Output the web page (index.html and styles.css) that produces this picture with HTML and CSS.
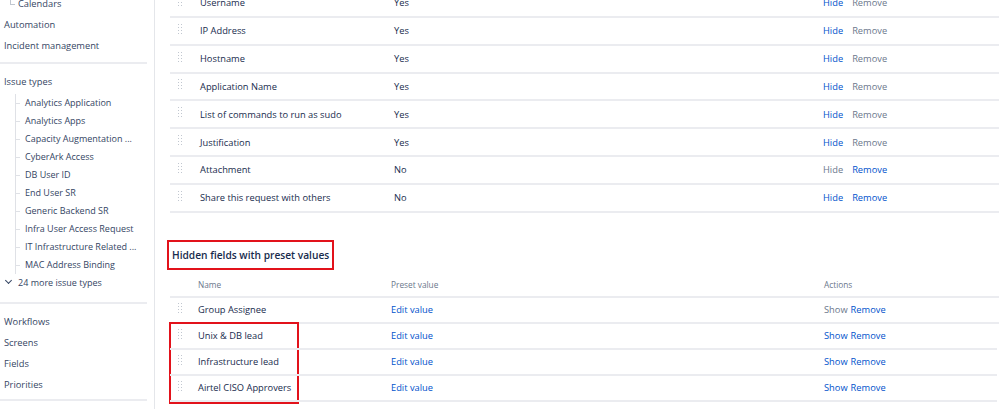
FILE: index.html
```html
<!DOCTYPE html>
<html lang="en">
<head>
  <meta charset="UTF-8">
  <title>Request type fields</title>
  <link rel="stylesheet" href="styles.css">
</head>
<body>
<div class="page">
  <!-- Sidebar -->
  <nav class="sidebar">
    <div class="group group-top">
      <div class="nav-item sub-last">Calendars</div>
      <div class="nav-item">Automation</div>
      <div class="nav-item">Incident management</div>
    </div>
    <div class="group group-types">
      <div class="nav-item title">Issue types</div>
      <ul class="tree">
        <li>Analytics Application</li>
        <li>Analytics Apps</li>
        <li>Capacity Augmentation ...</li>
        <li>CyberArk Access</li>
        <li>DB User ID</li>
        <li>End User SR</li>
        <li>Generic Backend SR</li>
        <li>Infra User Access Request</li>
        <li>IT Infrastructure Related ...</li>
        <li>MAC Address Binding</li>
      </ul>
      <div class="more"><span class="chev"></span>24 more issue types</div>
    </div>
    <div class="group group-bottom">
      <div class="nav-item">Workflows</div>
      <div class="nav-item">Screens</div>
      <div class="nav-item">Fields</div>
      <div class="nav-item">Priorities</div>
    </div>
  </nav>

  <!-- Main -->
  <main class="main">
    <div class="fields visible-fields">
      <div class="row"><span class="grip"></span><span class="name">Username</span><span class="val">Yes</span><span class="acts"><a class="link">Hide</a><a class="muted">Remove</a></span></div>
      <div class="row"><span class="grip"></span><span class="name">IP Address</span><span class="val">Yes</span><span class="acts"><a class="link">Hide</a><a class="muted">Remove</a></span></div>
      <div class="row"><span class="grip"></span><span class="name">Hostname</span><span class="val">Yes</span><span class="acts"><a class="link">Hide</a><a class="muted">Remove</a></span></div>
      <div class="row"><span class="grip"></span><span class="name">Application Name</span><span class="val">Yes</span><span class="acts"><a class="link">Hide</a><a class="muted">Remove</a></span></div>
      <div class="row"><span class="grip"></span><span class="name">List of commands to run as sudo</span><span class="val">Yes</span><span class="acts"><a class="link">Hide</a><a class="muted">Remove</a></span></div>
      <div class="row"><span class="grip"></span><span class="name">Justification</span><span class="val">Yes</span><span class="acts"><a class="link">Hide</a><a class="muted">Remove</a></span></div>
      <div class="row"><span class="grip"></span><span class="name">Attachment</span><span class="val">No</span><span class="acts"><a class="muted">Hide</a><a class="link">Remove</a></span></div>
      <div class="row"><span class="grip"></span><span class="name">Share this request with others</span><span class="val">No</span><span class="acts"><a class="link">Hide</a><a class="link">Remove</a></span></div>
    </div>

    <h3 class="section-title"><span class="boxed">Hidden fields with preset values</span></h3>

    <div class="fields hidden-fields">
      <div class="row head"><span></span><span class="name">Name</span><span class="val">Preset value</span><span class="acts">Actions</span></div>
      <div class="row"><span class="grip"></span><span class="name">Group Assignee</span><a class="val link">Edit value</a><span class="acts tight"><a class="muted">Show</a><a class="link">Remove</a></span></div>
      <div class="marked">
        <div class="row"><span class="grip"></span><span class="name">Unix &amp; DB lead</span><a class="val link">Edit value</a><span class="acts tight"><a class="link">Show</a><a class="link">Remove</a></span></div>
        <div class="row"><span class="grip"></span><span class="name">Infrastructure lead</span><a class="val link">Edit value</a><span class="acts tight"><a class="link">Show</a><a class="link">Remove</a></span></div>
        <div class="row"><span class="grip"></span><span class="name">Airtel CISO Approvers</span><a class="val link">Edit value</a><span class="acts tight"><a class="link">Show</a><a class="link">Remove</a></span></div>
      </div>
    </div>
  </main>
</div>
</body>
</html>
```

FILE: styles.css
```css
body {
  margin: 0;
  font-family: 'Open Sans', 'Noto Sans', sans-serif;
  font-size: 9.3px;
  color: #172b4d;
  background: #fff;
  overflow: hidden;
}
.page {
  display: flex;
  height: 409px;
}

/* sidebar */
.sidebar {
  width: 155px;
  flex: none;
  border-right: 1px solid #e4e6ea;
  box-sizing: border-box;
  padding-right: 7px;
  color: #344563;
  font-size: 9.3px;
}
.group {
  border-bottom: 2px solid #ebecf0;
}
.group-top {
  margin-top: -7px;
  padding-bottom: 6px;
}
.nav-item {
  height: 21px;
  line-height: 21px;
  padding-left: 4px;
  white-space: nowrap;
}
.sub-last {
  position: relative;
  padding-left: 18px;
}
.sub-last::before {
  content: "";
  position: absolute;
  left: 10px;
  top: 4px;
  width: 4px;
  height: 7px;
  border-left: 1px solid #c1c7d0;
  border-bottom: 1px solid #c1c7d0;
}
.group-types {
  padding-top: 7px;
  padding-bottom: 10px;
}
.title {
  margin-bottom: 2px;
}
.tree {
  list-style: none;
  margin: 0 0 0 15px;
  padding: 0;
  border-left: 1px solid #dfe1e6;
  font-size: 9px;
}
.tree li {
  position: relative;
  height: 18px;
  line-height: 18px;
  padding-left: 9px;
  white-space: nowrap;
}
.tree li::before {
  content: "";
  position: absolute;
  left: 0;
  top: 9px;
  width: 4px;
  border-top: 1px solid #dfe1e6;
}
.more {
  height: 18px;
  line-height: 18px;
  padding-left: 6px;
  font-size: 9px;
}
.chev {
  display: inline-block;
  width: 4px;
  height: 4px;
  margin-right: 7px;
  border-right: 1px solid #344563;
  border-bottom: 1px solid #344563;
  transform: rotate(45deg);
  vertical-align: 3px;
}
.group-bottom {
  padding-top: 7px;
  padding-bottom: 4px;
}

/* main */
.main {
  flex: 1;
  padding-left: 15px;
  min-width: 0;
}
.fields .row {
  display: grid;
  grid-template-columns: 30px 194px 429px 1fr;
  align-items: center;
  box-sizing: border-box;
  height: 27.85px;
  border-bottom: 2px solid #ebecf0;
  white-space: nowrap;
}
.visible-fields {
  margin-top: -10px;
}
.grip {
  position: relative;
  width: 5px;
  height: 11px;
  margin-left: 8px;
  margin-top: -3px;
}
.grip::before {
  content: "";
  position: absolute;
  left: 0;
  top: 0;
  width: 1px;
  height: 1px;
  background: #c1c7d0;
  box-shadow: 3px 0 #c1c7d0, 0 3px #c1c7d0, 3px 3px #c1c7d0,
              0 6px #c1c7d0, 3px 6px #c1c7d0, 0 9px #c1c7d0, 3px 9px #c1c7d0;
}
.acts a {
  margin-right: 9px;
}
.acts.tight a {
  margin-right: 3px;
}
.link {
  color: #0052cc;
}
.muted {
  color: #6b778c;
}

.section-title {
  margin: 27px 0 3px -3px;
  font-size: 10.2px;
  font-weight: 600;
}
.boxed {
  display: inline-block;
  padding: 6px 3px;
  border: 2px solid #e2121b;
}
.hidden-fields .row {
  grid-template-columns: 28px 193px 433px 1fr;
  height: 26px;
}
.hidden-fields .row.head {
  height: 25px;
  font-size: 8.3px;
  color: #6b778c;
}
.marked {
  width: 126px;
  border: 2px solid #e2121b;
  margin-left: -1px;
  margin-top: -2px;
}
.marked .row {
  width: 827px;
  margin-left: -1px;
}
```
